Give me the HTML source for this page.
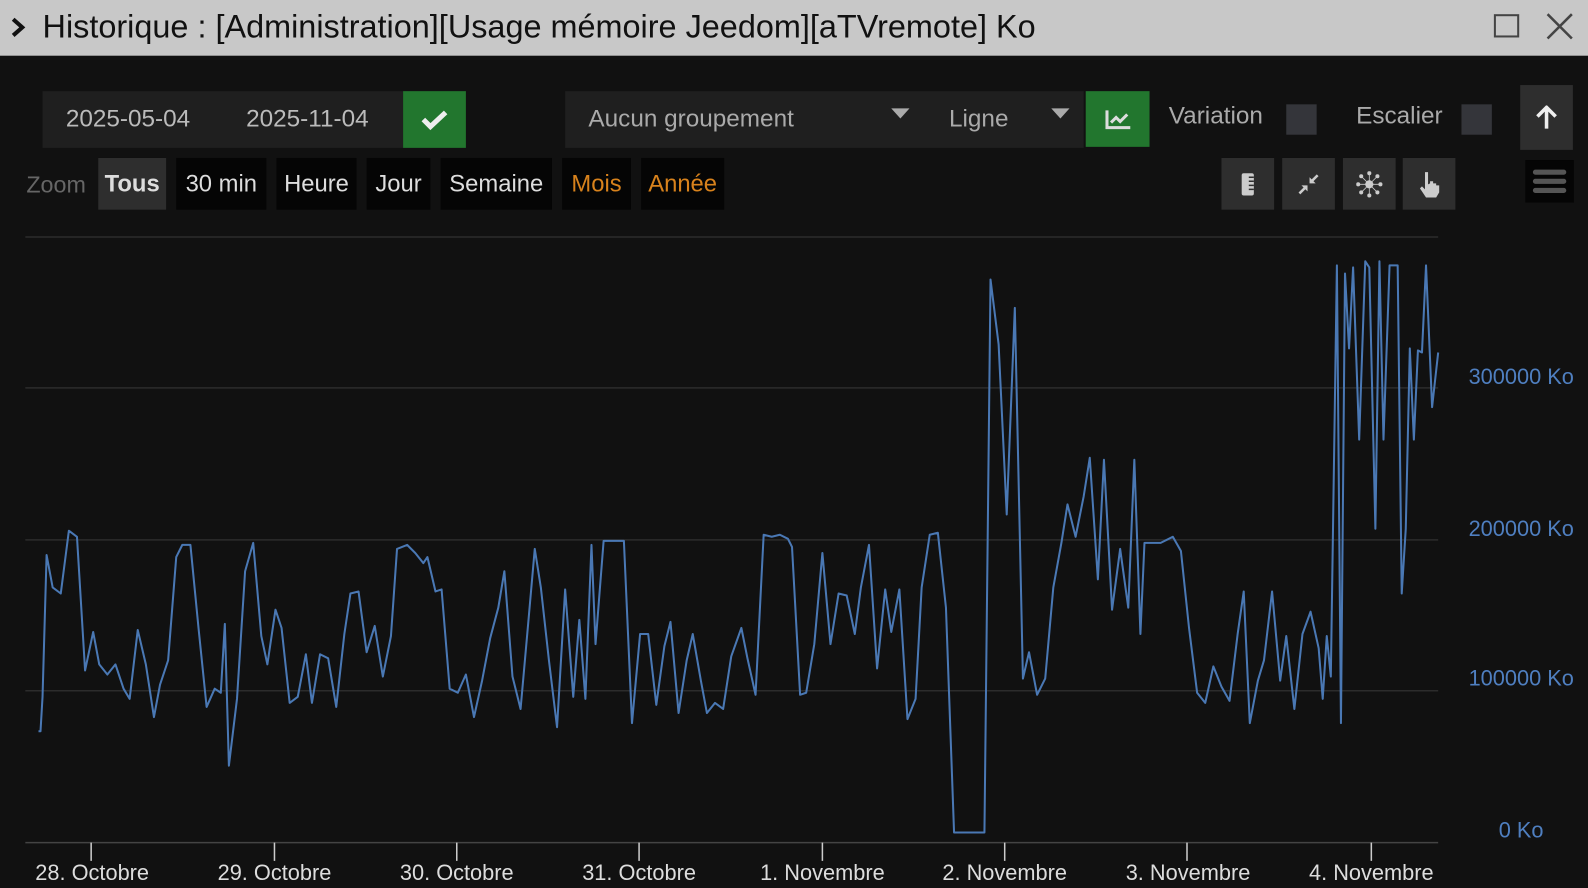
<!DOCTYPE html>
<html><head><meta charset="utf-8"><style>
*{margin:0;padding:0;box-sizing:border-box}
body{width:1588px;height:888px;background:#111;font-family:"Liberation Sans",sans-serif;overflow:hidden;position:relative}
#w{position:absolute;left:0;top:0;width:1568px;height:877px;transform:scale(1.0128);transform-origin:0 0}
.a{position:absolute}
.t{display:flex;align-items:center;justify-content:center}
.title{left:0;top:0;width:1568px;height:55px;background:#c8c8c8;color:#111;font-size:32px}
.btn{background:#050505;color:#ddd;font-size:23.5px;height:51px;top:156px}
.ib{background:#2e2e2e;width:52px;height:51px;top:156px}
.in{color:#bbb;font-size:24px}
</style></head><body><div id="w">
<div class="a title">
  <svg class="a" style="left:10px;top:17px" width="16" height="20" viewBox="0 0 16 20"><path d="M3 2l9 8-9 8" stroke="#111" stroke-width="4" fill="none"/></svg>
  <span class="a" style="left:42px;top:8px">Historique : [Administration][Usage mémoire Jeedom][aTVremote] Ko</span>
  <div class="a" style="left:1475px;top:14px;width:25px;height:23px;border:2.5px solid #444"></div>
  <svg class="a" style="left:1526px;top:12px" width="28" height="28"><path d="M2 2L26 26M26 2L2 26" stroke="#444" stroke-width="2.5"/></svg>
</div>

<div class="a" style="left:42px;top:90px;width:356px;height:56px;background:#1f1f1f"></div>
<div class="a in" style="left:65px;top:104px">2025-05-04</div>
<div class="a in" style="left:243px;top:104px">2025-11-04</div>
<div class="a t" style="left:398px;top:90px;width:62px;height:56px;background:#22762e"><svg width="28" height="22"><path d="M3 11l7 7L25 4" stroke="#eee" stroke-width="5" fill="none"/></svg></div>

<div class="a" style="left:558px;top:90px;width:512px;height:56px;background:#1f1f1f"></div>
<div class="a in" style="left:581px;top:104px;color:#aaa">Aucun groupement</div>
<div class="a" style="left:880px;top:107px;width:0;height:0;border-left:9px solid transparent;border-right:9px solid transparent;border-top:10px solid #aaa"></div>
<div class="a in" style="left:937px;top:104px;color:#aaa">Ligne</div>
<div class="a" style="left:1038px;top:107px;width:0;height:0;border-left:9px solid transparent;border-right:9px solid transparent;border-top:10px solid #aaa"></div>
<div class="a t" style="left:1072px;top:90px;width:63px;height:55px;background:#22762e"><svg width="26" height="20"><path d="M2 1v17h23" stroke="#ddd" stroke-width="3" fill="none"/><path d="M6 13l5-5 4 4 7-7" stroke="#ddd" stroke-width="3" fill="none"/></svg></div>
<div class="a in" style="left:1154px;top:101px;color:#aaa">Variation</div>
<div class="a" style="left:1270px;top:103px;width:30px;height:30px;background:#34353a"></div>
<div class="a in" style="left:1339px;top:101px;color:#aaa">Escalier</div>
<div class="a" style="left:1443px;top:103px;width:30px;height:30px;background:#34353a"></div>
<div class="a t" style="left:1501px;top:84px;width:52px;height:64px;background:#2e2e2e"><svg width="22" height="24"><path d="M11 23V3M2 11l9-9 9 9" stroke="#eee" stroke-width="3.5" fill="none"/></svg></div>

<div class="a" style="left:26px;top:169px;color:#666;font-size:23px">Zoom</div>
<div class="a t btn" style="left:97px;width:67px;background:#2e2e2e;font-weight:bold">Tous</div>
<div class="a t btn" style="left:174px;width:89px">30 min</div>
<div class="a t btn" style="left:273px;width:79px">Heure</div>
<div class="a t btn" style="left:362px;width:63px">Jour</div>
<div class="a t btn" style="left:435px;width:110px">Semaine</div>
<div class="a t btn" style="left:555px;width:68px;color:#d8821c">Mois</div>
<div class="a t btn" style="left:633px;width:82px;color:#d8821c">Année</div>

<div class="a t ib" style="left:1206px"><svg width="14" height="24"><rect x="1" y="1" width="12" height="22" rx="2" fill="#ccc"/><path d="M8 5h5M8 9h5M8 13h5M8 17h5" stroke="#2e2e2e" stroke-width="1.5"/></svg></div>
<div class="a t ib" style="left:1266px"><svg width="24" height="24"><path d="M3 21l7-7M21 3l-7 7" stroke="#ccc" stroke-width="2.5"/><path d="M5 13h6v6zM19 11h-6V5z" fill="#ccc"/></svg></div>
<div class="a t ib" style="left:1326px"><svg width="26" height="26" fill="#ccc"><circle cx="13" cy="13" r="4"/><circle cx="13" cy="2" r="2"/><circle cx="13" cy="24" r="2"/><circle cx="2" cy="13" r="2"/><circle cx="24" cy="13" r="2"/><circle cx="5" cy="5" r="2"/><circle cx="21" cy="21" r="2"/><circle cx="5" cy="21" r="2"/><circle cx="21" cy="5" r="2"/><path d="M13 2v22M2 13h22M5 5l16 16M5 21L21 5" stroke="#ccc" stroke-width="0.8"/></svg></div>
<div class="a t ib" style="left:1385px"><svg width="24" height="28"><path d="M8 2h3v12l2-1v-2h3v2h3v2h3v7l-3 5H9l-6-9 2-2 3 3z" fill="#ccc"/></svg></div>
<div class="a t" style="left:1506px;top:158px;width:48px;height:42px;background:#050505"><svg width="34" height="26"><path d="M3 4h28M3 13h28M3 22h28" stroke="#555" stroke-width="5" stroke-linecap="round"/></svg></div>

<svg class="a" style="left:0;top:0" width="1568" height="877">
<g stroke="#2c2c2c" stroke-width="1.5"><path d="M25 234H1420M25 383H1420M25 533H1420M25 682H1420"/></g>
<path d="M25 832H1420" stroke="#444" stroke-width="1.5"/>
<g stroke="#ccc" stroke-width="1.5"><path d="M90 832v18M271 832v18M451 832v18M631 832v18M812 832v18M992 832v18M1172 832v18M1354 832v18"/></g>
<g fill="#ddd" font-size="21.5" text-anchor="middle" font-family="Liberation Sans,sans-serif">
<text x="91" y="869">28. Octobre</text><text x="271" y="869">29. Octobre</text><text x="451" y="869">30. Octobre</text><text x="631" y="869">31. Octobre</text><text x="812" y="869">1. Novembre</text><text x="992" y="869">2. Novembre</text><text x="1173" y="869">3. Novembre</text><text x="1354" y="869">4. Novembre</text></g>
<g fill="#4f7fc0" font-size="21.5" text-anchor="end" font-family="Liberation Sans,sans-serif">
<text x="1554" y="379">300000 Ko</text><text x="1554" y="529">200000 Ko</text><text x="1554" y="677">100000 Ko</text><text x="1524" y="827">0 Ko</text></g>
<polyline fill="none" stroke="#4a78b4" stroke-width="2" stroke-linejoin="round" points="38,722 40,722 42,688 46,548 52,580 60,586 68,524 76,530 84,662 92,624 98,656 106,666 114,656 122,680 128,690 136,622 144,656 152,708 158,676 166,652 174,550 180,538 188,538 196,620 204,698 212,680 218,684 222,616 226,756 234,690 242,564 250,536 258,628 264,656 272,602 278,620 286,694 294,688 302,646 308,694 316,646 324,650 332,698 340,626 346,586 354,584 362,644 370,618 378,668 386,628 392,542 402,538 410,546 418,556 422,550 430,584 436,582 444,680 452,684 460,666 468,708 476,672 484,630 492,600 498,564 506,668 514,700 522,610 528,542 534,580 542,652 550,718 558,582 566,688 572,612 578,690 584,538 588,636 596,534 616,534 624,714 632,626 640,626 648,696 656,638 662,614 670,704 678,652 684,626 692,672 698,704 706,694 714,700 722,648 732,620 738,650 746,686 754,528 762,530 770,528 778,532 782,540 790,686 796,684 804,636 812,546 820,636 828,586 836,588 844,626 850,580 858,538 866,660 874,582 880,624 888,582 896,710 904,690 910,580 918,528 926,526 934,600 942,822 972,822 978,276 986,340 994,508 1002,304 1010,670 1016,644 1024,686 1032,670 1040,580 1048,536 1054,498 1062,530 1070,490 1076,452 1084,572 1090,454 1098,602 1106,542 1114,600 1120,454 1126,626 1130,536 1146,536 1158,530 1166,544 1174,620 1182,684 1190,694 1198,658 1206,678 1214,692 1222,626 1228,584 1234,714 1242,672 1248,652 1256,584 1264,672 1270,628 1278,700 1286,626 1294,604 1302,640 1306,690 1310,628 1314,668 1320,262 1324,714 1328,270 1332,344 1336,264 1342,434 1348,258 1352,264 1358,522 1362,258 1366,434 1372,262 1380,262 1384,586 1388,522 1392,344 1396,434 1400,346 1404,348 1408,262 1414,402 1420,348"/>
</svg>
</div></body></html>
